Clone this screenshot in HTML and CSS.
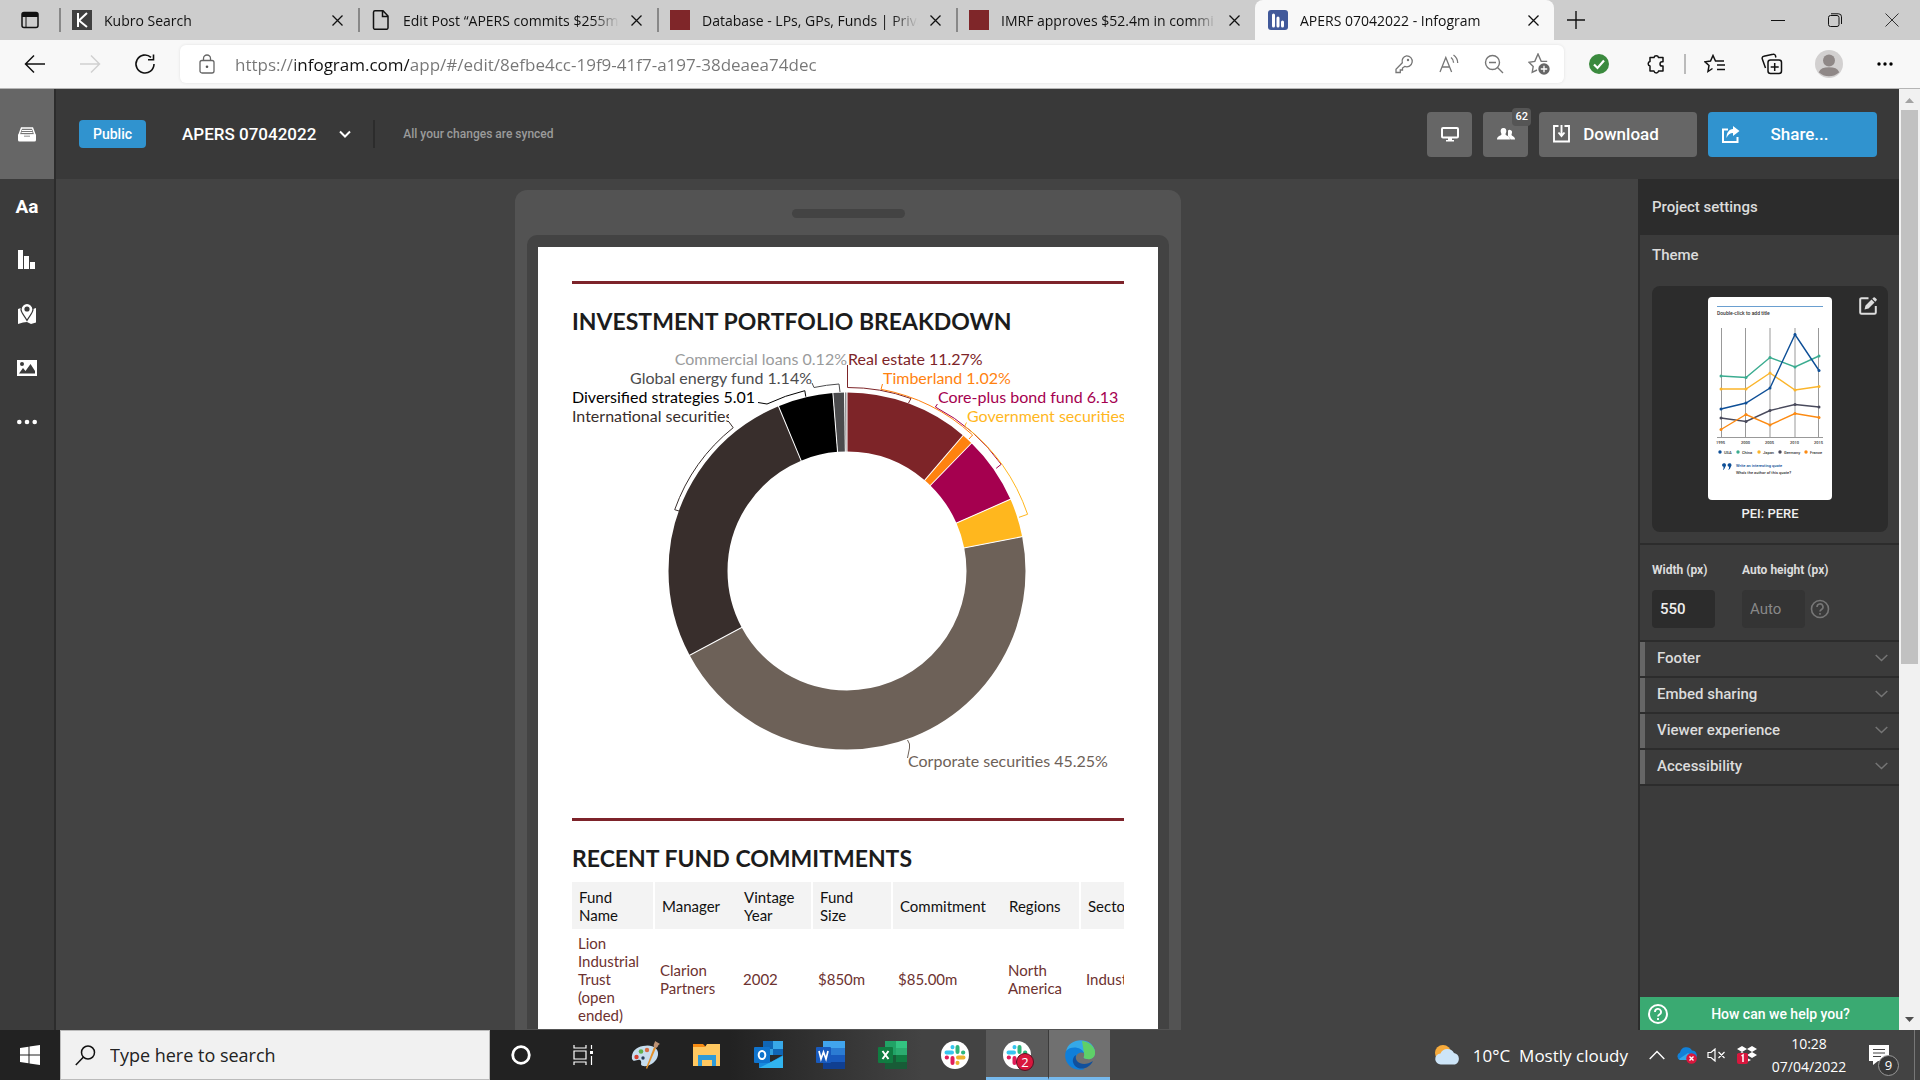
FILE: index.html
```html
<!DOCTYPE html>
<html lang="en">
<head>
<meta charset="UTF-8">
<meta name="viewport" content="width=device-width, initial-scale=1.0">
<title>APERS 07042022 - Infogram</title>
<link rel="stylesheet" href="styles.css">
</head>
<body>

<!-- Browser tabs -->
<div class="tab-strip">
    <button class="tab-menu" aria-label="Tab actions">
        <svg width="20" height="20" viewBox="0 0 20 20"><rect x="2" y="2.500" width="16" height="15" rx="2" fill="none" stroke="#111" stroke-width="1.500"/><path d="M2 3h16v4H2z" fill="#111"/><path d="M6 7v10" stroke="#111"/></svg>
    </button>
    <div class="tab">
        <svg width="20" height="20" viewBox="0 0 20 20"><path d="M0 0h20v20H0z" fill="#404040"/><path d="M6 3v14M15 3L7 10.500 15 17" fill="none" stroke="#fff" stroke-width="2"/></svg>
        <a href="#">Kubro Search</a>
        <button class="tab-close" aria-label="Close tab"><svg width="11" height="11" viewBox="0 0 11 11"><path d="M.5.5l10 10M10.500.5l-10 10" stroke="#111" stroke-width="1.300"/></svg></button>
    </div>
    <div class="tab">
        <svg width="20" height="20" viewBox="0 0 20 20"><path d="M4 .8h8l5 5.200v12a1.500 1.500 0 0 1-1.500 1.300H4A1.500 1.500 0 0 1 2.500 18V2.200A1.500 1.500 0 0 1 4 .8zM11.500 1v5.500H17" fill="none" stroke="#111" stroke-width="1.500"/></svg>
        <a href="#">Edit Post “APERS commits $255m</a>
        <button class="tab-close" aria-label="Close tab"><svg width="11" height="11" viewBox="0 0 11 11"><path d="M.5.5l10 10M10.500.5l-10 10" stroke="#111" stroke-width="1.300"/></svg></button>
    </div>
    <div class="tab">
        <svg width="20" height="20"><path d="M0 0h20v20H0z" fill="#7f2629"/></svg>
        <a href="#">Database - LPs, GPs, Funds | Priva</a>
        <button class="tab-close" aria-label="Close tab"><svg width="11" height="11" viewBox="0 0 11 11"><path d="M.5.5l10 10M10.500.5l-10 10" stroke="#111" stroke-width="1.300"/></svg></button>
    </div>
    <div class="tab">
        <svg width="20" height="20"><path d="M0 0h20v20H0z" fill="#7f2629"/></svg>
        <a href="#">IMRF approves $52.4m in commi</a>
        <button class="tab-close" aria-label="Close tab"><svg width="11" height="11" viewBox="0 0 11 11"><path d="M.5.5l10 10M10.500.5l-10 10" stroke="#111" stroke-width="1.300"/></svg></button>
    </div>
    <div class="tab active">
        <svg width="20" height="20" viewBox="0 0 20 20"><rect width="20" height="20" rx="3" fill="#41599a"/><path d="M5.500 5v11M10 8v8M14.500 12v4" stroke="#fff" stroke-width="3" stroke-linecap="round"/></svg>
        <a href="#">APERS 07042022 - Infogram</a>
        <button class="tab-close" aria-label="Close tab"><svg width="11" height="11" viewBox="0 0 11 11"><path d="M.5.5l10 10M10.500.5l-10 10" stroke="#111" stroke-width="1.300"/></svg></button>
    </div>
    <button class="new-tab" aria-label="New tab"><svg width="18" height="18" viewBox="0 0 18 18"><path d="M9 0v18M0 9h18" stroke="#111" stroke-width="1.400"/></svg></button>
    <div class="window-controls">
        <button aria-label="Minimize"><svg width="14" height="14" viewBox="0 0 14 14"><path d="M0 7.500h14" stroke="#111"/></svg></button>
        <button aria-label="Restore"><svg width="14" height="14" viewBox="0 0 14 14"><rect x=".5" y="2.500" width="10.500" height="11" rx="2" fill="none" stroke="#111"/><path d="M3 .8h7.500a3 3 0 0 1 3 3V11" fill="none" stroke="#111"/></svg></button>
        <button aria-label="Close"><svg width="14" height="14" viewBox="0 0 14 14"><path d="M.5.5l13 13M13.500.5l-13 13" stroke="#333"/></svg></button>
    </div>
</div>

<!-- Address bar -->
<div class="toolbar">
    <div class="nav-buttons">
        <button aria-label="Back"><svg width="22" height="20" viewBox="0 0 22 20"><path d="M21 10H2M10 1.500L1.500 10l8.500 8.500" fill="none" stroke="#111" stroke-width="1.500"/></svg></button>
        <button aria-label="Forward" disabled><svg width="22" height="20" viewBox="0 0 22 20"><path d="M1 10h19M12 1.500l8.500 8.500-8.500 8.500" fill="none" stroke="#d0d0d0" stroke-width="1.500"/></svg></button>
        <button aria-label="Refresh"><svg width="22" height="22" viewBox="0 0 22 22"><path d="M20 11a9 9 0 1 1-3-6.700M19.500 1.500v5.300h-5.500" fill="none" stroke="#111" stroke-width="1.600"/></svg></button>
    </div>
    <div class="address">
        <svg width="16" height="20" viewBox="0 0 16 20"><rect x="1" y="6.500" width="14" height="12.500" rx="2" fill="none" stroke="#666" stroke-width="1.300"/><path d="M4.500 6.500V4.500a3.500 3.500 0 0 1 7 0v2" fill="none" stroke="#666" stroke-width="1.300"/><circle cx="8" cy="12.700" r="1.300" fill="#555"/></svg>
        <input type="text" class="url" aria-label="Address" value="https://infogram.com/app/#/edit/8efbe4cc-19f9-41f7-a197-38deaea74dec">
        <div class="address-actions">
            <button aria-label="Passwords"><svg width="20" height="20" viewBox="0 0 20 20"><path d="M12.500 1.800a5.500 5.500 0 1 1-1.800 10.600L8.500 14v2H6.300v2.500H2v-3.200l6.300-6.500a5.500 5.500 0 0 1 4.200-7z" fill="none" stroke="#767676" stroke-width="1.300"/><circle cx="14" cy="6" r="1.200" fill="#767676"/></svg></button>
            <button aria-label="Read aloud"><svg width="20" height="20" viewBox="0 0 20 20"><path d="M1 18L6.800 3.500 12.600 18M3 13h7.600M12 3.500c1.800 1.300 2.600 3 2.600 5.200M14.500 1c2.800 1.900 4.200 4.500 4.200 8" fill="none" stroke="#767676" stroke-width="1.300"/></svg></button>
            <button aria-label="Zoom"><svg width="20" height="20" viewBox="0 0 20 20"><circle cx="8.500" cy="8.500" r="7" fill="none" stroke="#767676" stroke-width="1.400"/><path d="M5 8.500h7M13.500 13.500l5.500 5.500" stroke="#767676" stroke-width="1.400"/></svg></button>
            <button aria-label="Add to favourites"><svg width="22" height="22" viewBox="0 0 22 22"><path d="M9 18l-4.800 2.300 1-5.800L1 10.200l5.800-.8L10 2l3.200 7.400h6" fill="none" stroke="#767676" stroke-width="1.400" transform="translate(0 -1)"/><circle cx="16" cy="16" r="5.700" fill="#666"/><path d="M16 12.800v6.400M12.800 16h6.400" stroke="#fff" stroke-width="1.300"/></svg></button>
        </div>
    </div>
    <div class="browser-actions">
        <button aria-label="Protection"><svg width="20" height="20" viewBox="0 0 20 20"><circle cx="10" cy="10" r="10" fill="#3b8a3e"/><path d="M5 10.500l3.500 3.500L15 6.500" fill="none" stroke="#fff" stroke-width="2.200"/></svg></button>
        <button aria-label="Extensions"><svg width="20" height="20" viewBox="0 0 20 20"><path d="M4 3.500h4a2.300 2.300 0 0 1 4.500 0h4.500v4.200h-.8a2.200 2.200 0 0 0 0 4.400h.8v5h-4.500a2.300 2.300 0 0 1-4.500 0H4v-5a2.300 2.300 0 0 1 0-4.500z" fill="none" stroke="#111" stroke-width="1.500" stroke-linejoin="round"/></svg></button>
        <span class="divider"></span>
        <button aria-label="Favourites"><svg width="22" height="20" viewBox="0 0 22 20"><path d="M8.500 14.500l-4.500 3 1-6L1 7.800l5.500-.8L9 1.500 11.500 7H20M13 11h8M13 15.500h8" fill="none" stroke="#111" stroke-width="1.500"/></svg></button>
        <button aria-label="Collections"><svg width="22" height="22" viewBox="0 0 22 22"><rect x="7" y="7" width="13.500" height="13.500" rx="2.500" fill="none" stroke="#111" stroke-width="1.500"/><path d="M13.700 10v8M9.700 14h8M4.500 15L1.300 6a2 2 0 0 1 1.500-2.800L12 1.200A2 2 0 0 1 14.500 3l.4 1.500" fill="none" stroke="#111" stroke-width="1.500"/></svg></button>
        <button aria-label="Profile"><svg width="28" height="28" viewBox="0 0 28 28"><circle cx="14" cy="14" r="14" fill="#d2d0d0"/><circle cx="14" cy="10.500" r="6" fill="#8f8887"/><path d="M5 22c2-5 16-5 18 0a14 14 0 0 1-18 0z" fill="#8f8887" stroke="#8f8887" stroke-width="2"/></svg></button>
        <button aria-label="Settings and more"><svg width="18" height="6" viewBox="0 0 18 6"><circle cx="2" cy="3" r="1.700"/><circle cx="8" cy="3" r="1.700"/><circle cx="14" cy="3" r="1.700"/></svg></button>
    </div>
</div>

<div class="app">
    <!-- Left tool rail -->
    <nav class="rail">
        <button class="active" aria-label="Objects"><svg width="18" height="15" viewBox="0 0 18 15"><path d="M3.500 1h11l2.500 7H1z" fill="#777" stroke="#fff" stroke-width="1.500"/><path d="M4 3.500h10M3.500 5.500h11" stroke="#fff"/><path d="M0 7.500h6v2h6v-2h6V13a1.500 1.500 0 0 1-1.500 1.500h-15A1.500 1.500 0 0 1 0 13z" fill="#fff"/></svg></button>
        <button class="text-tool">Aa</button>
        <button aria-label="Charts"><svg width="18" height="20" viewBox="0 0 18 20"><path d="M0 0h5v19H0zM6 6h5v13H6zM12 12h5v7h-5z" fill="#fff"/></svg></button>
        <button aria-label="Maps"><svg width="18" height="20" viewBox="0 0 18 20"><path d="M0 5l3-1 6 12 6-11 3-1v14.500l-5 1.500-4-2-4 .5L0 20z" fill="#fff"/><path d="M9 16.500C6 11 3 8.500 3 5.500a6 6 0 0 1 12 0c0 3-3 5.500-6 11z" fill="#fff" stroke="#3b3b3b" stroke-width="1.200"/><circle cx="9" cy="5" r="2.600" fill="#3b3b3b"/></svg></button>
        <button aria-label="Images"><svg width="20" height="16" viewBox="0 0 20 16"><path d="M0 0h20v16H0z" fill="#fff"/><circle cx="5" cy="4" r="2" fill="#3b3b3b"/><path d="M2 13.500L6 8l2.500 3L13.500 4l4.500 7v2.500z" fill="#3b3b3b"/></svg></button>
        <button aria-label="More"><svg width="20" height="6" viewBox="0 0 20 6"><g fill="#fff"><circle cx="2.300" cy="3" r="2.300"/><circle cx="10" cy="3" r="2.300"/><circle cx="17.700" cy="3" r="2.300"/></g></svg></button>
    </nav>

    <div class="workspace">
        <header class="project-bar">
            <span class="visibility">Public</span>
            <h1>APERS 07042022</h1>
            <button class="project-menu" aria-label="Project menu"><svg width="12" height="8" viewBox="0 0 12 8"><path d="M1 1.500l5 5 5-5" fill="none" stroke="#fff" stroke-width="2"/></svg></button>
            <span class="sync">All your changes are synced</span>
            <div class="project-actions">
                <button class="square" aria-label="Preview"><svg width="18" height="15" viewBox="0 0 18 15"><rect x="1" y="1" width="16" height="9.500" rx="1" fill="none" stroke="#fff" stroke-width="2"/><path d="M7 10h4v3h2v1.500H5V13h2z" fill="#fff"/></svg></button>
                <button class="square" aria-label="Team"><svg width="18" height="12" viewBox="0 0 18 12"><path d="M11 2.500A2.500 2.500 0 0 1 15 3.500c.2 1.500-.5 2.500-.5 3.500 1 1.500 3.500 1.500 3.500 4.500h-4.500c-.5-2-2-2.500-2.500-3.500z" fill="#fff"/><path d="M6.500 0C9 0 9.500 2 9.300 3.700 9 5 8.500 5.500 8.500 6.500c1 1.500 4.500 1.500 4.500 5H0c0-3.500 3.500-3.500 4.500-5C4.500 5.500 4 5 3.700 3.700 3.500 2 4 0 6.500 0z" fill="#fff"/></svg><span class="count">62</span></button>
                <button class="action"><svg width="18" height="18" viewBox="0 0 18 18"><path d="M5.500 1H1v15.500h15V1h-4.500M8.500 0v10M5.500 7.500l3 3.500 3-3.500" fill="none" stroke="#fff" stroke-width="1.900"/></svg><span>Download</span></button>
                <button class="action share"><svg width="18" height="17" viewBox="0 0 18 17"><path d="M6 3.500H1V16h14.500v-5" fill="none" stroke="#fff" stroke-width="2"/><path d="M11 0l6.500 5L11 10V7C8 7 6 8.500 4.500 12 4.500 6.500 7 3.500 11 3z" fill="#fff"/></svg><span>Share...</span></button>
            </div>
        </header>

        <div class="editor">
            <main class="canvas">
                <div class="phone">
                    <div class="speaker"></div>
                    <div class="bezel">
                        <article class="report">
                            <section class="breakdown">
                                <h2>INVESTMENT PORTFOLIO BREAKDOWN</h2>
                                <svg class="donut" viewBox="0 0 552 440">
                                    <!-- slices, each circle is 100 units long -->
                                    <g transform="translate(275 231) rotate(-90)" fill="none" stroke-width="59">
                                        <circle r="149" pathLength="100" stroke="#7d2428" stroke-dasharray="11.27 88.73"/>
                                        <circle r="149" pathLength="100" stroke="#ff820f" stroke-dasharray="1.02 98.98" stroke-dashoffset="-11.27"/>
                                        <circle r="149" pathLength="100" stroke="#a5004f" stroke-dasharray="6.13 93.87" stroke-dashoffset="-12.29"/>
                                        <circle r="149" pathLength="100" stroke="#ffb71e" stroke-dasharray="3.5 96.5" stroke-dashoffset="-18.42"/>
                                        <circle r="149" pathLength="100" stroke="#6d6158" stroke-dasharray="45.25 54.75" stroke-dashoffset="-21.92"/>
                                        <circle r="149" pathLength="100" stroke="#382e2c" stroke-dasharray="26.56 73.44" stroke-dashoffset="-67.17"/>
                                        <circle r="149" pathLength="100" stroke="#000" stroke-dasharray="5.01 94.99" stroke-dashoffset="-93.73"/>
                                        <circle r="149" pathLength="100" stroke="#4b4b4d" stroke-dasharray="1.14 98.86" stroke-dashoffset="-98.74"/>
                                        <circle r="149" pathLength="100" stroke="#9a9b9c" stroke-dasharray="0.12 99.88" stroke-dashoffset="-99.88"/>
                                    </g>
                                    <g transform="translate(275 231)" stroke="#fff">
                                        <path d="M0-179v60"/>
                                        <path d="M0-179v60" transform="rotate(40.57)"/>
                                        <path d="M0-179v60" transform="rotate(44.24)"/>
                                        <path d="M0-179v60" transform="rotate(66.31)"/>
                                        <path d="M0-179v60" transform="rotate(78.91)"/>
                                        <path d="M0-179v60" transform="rotate(241.81)"/>
                                        <path d="M0-179v60" transform="rotate(337.43)"/>
                                        <path d="M0-179v60" transform="rotate(355.46)"/>
                                        <path d="M0-179v60" transform="rotate(359.2)"/>
                                    </g>
                                    <!-- leader lines -->
                                    <g fill="none">
                                        <path d="M275.500 25v22.500A184 184 0 0 1 339 58.500l-2.500 4.500" stroke="#7d2428"/>
                                        <path d="M310.500 44l-1.500 5.300A187 187 0 0 1 400.600 95l-3.600 4" stroke="#ff820f"/>
                                        <path d="M365.400 64l-2 3A188 188 0 0 1 429.200 124.300l-5 4" stroke="#a5004f"/>
                                        <path d="M394.500 82.500l-1.700 3.500A190 190 0 0 1 455.600 174.300l-8.600 3" stroke="#ffb71e"/>
                                        <path d="M240 43l2 4.500A187 187 0 0 1 267 44l1 8" stroke="#4b4b4d"/>
                                        <path d="M186 62.500l9 1.500A187 187 0 0 1 232.800 50.700l1 6" stroke="#000"/>
                                        <path d="M157 82l4.200 5.700A184 184 0 0 0 102.700 169.700l4.300 1.300" stroke="#382e2c"/>
                                        <path d="M335.500 400q3 4 2 8l-2 10" stroke="#6d6158"/>
                                    </g>
                                    <g class="labels">
                                        <text x="275" y="25" text-anchor="end" fill="#9a9b9c">Commercial loans 0.12%</text>
                                        <text x="276" y="25" fill="#7d2428">Real estate 11.27%</text>
                                        <text x="240" y="44" text-anchor="end" fill="#4b4b4d">Global energy fund 1.14%</text>
                                        <text x="311" y="44" fill="#ff820f">Timberland 1.02%</text>
                                        <text x="0" y="63" fill="#000">Diversified strategies 5.01</text>
                                        <text x="366" y="63" fill="#a5004f">Core-plus bond fund 6.13</text>
                                        <svg x="0" y="64" width="157" height="26"><text x="0" y="18" fill="#382e2c">International securities</text></svg>
                                        <text x="395" y="82" fill="#ffb71e">Government securities</text>
                                        <text x="336" y="427" fill="#6d6158">Corporate securities 45.25%</text>
                                    </g>
                                </svg>
                            </section>

                            <section class="commitments">
                                <h2>RECENT FUND COMMITMENTS</h2>
                                <table>
                                    <thead>
                                        <tr>
                                            <th class="fund">Fund Name</th>
                                            <th class="manager">Manager</th>
                                            <th class="vintage">Vintage Year</th>
                                            <th class="size">Fund<br>Size</th>
                                            <th class="amount">Commitment</th>
                                            <th class="regions">Regions</th>
                                            <th class="sectors">Sectors</th>
                                        </tr>
                                    </thead>
                                    <tbody>
                                        <tr>
                                            <td>Lion Industrial Trust (open ended)</td>
                                            <td>Clarion Partners</td>
                                            <td>2002</td>
                                            <td>$850m</td>
                                            <td>$85.00m</td>
                                            <td>North America</td>
                                            <td>Industrial</td>
                                        </tr>
                                    </tbody>
                                </table>
                            </section>
                        </article>
                    </div>
                </div>
            </main>

            <!-- Project settings -->
            <aside class="settings">
                <h2>Project settings</h2>
                <section class="theme">
                    <h3>Theme</h3>
                    <div class="theme-card">
                        <button class="edit-theme" aria-label="Edit theme"><svg width="18" height="18" viewBox="0 0 18 18"><path d="M9.500 1.200H2.500A1.300 1.300 0 0 0 1.200 2.500v13a1.300 1.300 0 0 0 1.300 1.300h13a1.300 1.300 0 0 0 1.300-1.300V9" fill="none" stroke="#ddd" stroke-width="2"/><path d="M5.500 12.500l1-4 6-6 3 3-6 6zM13.300 1.700L14.500.5a1 1 0 0 1 1.400 0l1.600 1.600a1 1 0 0 1 0 1.400L16.300 4.700z" fill="#ddd"/></svg></button>
                        <svg class="preview" width="124" height="203" viewBox="0 0 124 203">
                            <rect width="124" height="203" rx="4" fill="#fff"/>
                            <path d="M9 9.500h106" stroke="#6a9fd0"/>
                            <text x="9" y="18">Double-click to add title</text>
                            <path d="M13.500 31v109M37.500 31v109M62 31v109M87 31v109M110.500 31v109M9 140.500h106" stroke="#999"/>
                            <g fill="none" stroke-width="1.400">
                                <path d="M13 79l25 1.500 24-20 25 9.500 24-11" stroke="#3bac90"/>
                                <path d="M13 92h25l24-16 25 17 24-3.500" stroke="#fbb52b"/>
                                <path d="M13 112l25-6 24-15L87 37.500l24 36" stroke="#0e4f97"/>
                                <path d="M13 121l25 3.500 24-11 25-6 24 2.500" stroke="#494a5c"/>
                                <path d="M13 132.500l25-15 24 10.500 25-11.500 24 4" stroke="#fc8a12"/>
                            </g>
                            <g fill="#3bac90"><circle cx="13" cy="79" r="1.500"/><circle cx="38" cy="80.500" r="1.500"/><circle cx="62" cy="60.500" r="1.500"/><circle cx="87" cy="70" r="1.500"/><circle cx="111" cy="59" r="1.500"/><circle cx="30" cy="155" r="1.700"/></g>
                            <g fill="#fbb52b"><circle cx="13" cy="92" r="1.500"/><circle cx="38" cy="92" r="1.500"/><circle cx="62" cy="76" r="1.500"/><circle cx="87" cy="93" r="1.500"/><circle cx="111" cy="89.500" r="1.500"/><circle cx="51" cy="155" r="1.700"/></g>
                            <g fill="#0e4f97"><circle cx="13" cy="112" r="1.500"/><circle cx="38" cy="106" r="1.500"/><circle cx="62" cy="91" r="1.500"/><circle cx="87" cy="37.500" r="1.500"/><circle cx="111" cy="73.500" r="1.500"/><circle cx="12" cy="155" r="1.700"/></g>
                            <g fill="#494a5c"><circle cx="13" cy="121" r="1.500"/><circle cx="38" cy="124.500" r="1.500"/><circle cx="62" cy="113.500" r="1.500"/><circle cx="87" cy="107.500" r="1.500"/><circle cx="111" cy="110" r="1.500"/><circle cx="72" cy="155" r="1.700"/></g>
                            <g fill="#fc8a12"><circle cx="13" cy="132.500" r="1.500"/><circle cx="38" cy="117.500" r="1.500"/><circle cx="62" cy="128" r="1.500"/><circle cx="87" cy="116.500" r="1.500"/><circle cx="111" cy="120.500" r="1.500"/><circle cx="98" cy="155" r="1.700"/></g>
                            <g class="tiny">
                                <text x="8" y="147">1995</text><text x="33" y="147">2000</text><text x="57" y="147">2005</text><text x="82" y="147">2010</text><text x="106" y="147">2015</text>
                                <text x="16" y="157">USA</text><text x="34" y="157">China</text><text x="55" y="157">Japan</text><text x="76" y="157">Germany</text><text x="102" y="157">France</text>
                                <text class="quote" x="28" y="170">Write an interesting quote</text>
                                <text x="28" y="177">Who's the author of this quote?</text>
                            </g>
                            <path d="M14 168a2 2 0 1 1 3.500 1.500Q17 172 14.500 173q1.500-1.500 1-3.200A2 2 0 0 1 14 168zm5.500 0a2 2 0 1 1 3.500 1.500q-.5 2.500-3 3.500 1.500-1.500 1-3.200a2 2 0 0 1-1.500-1.800z" fill="#0e4f97"/>
                        </svg>
                        <span class="theme-name">PEI: PERE</span>
                    </div>
                </section>
                <section class="dimensions">
                    <div class="field">
                        <label for="width">Width (px)</label>
                        <input type="text" id="width" value="550">
                    </div>
                    <div class="field">
                        <label for="height">Auto height (px)</label>
                        <div class="field-row">
                            <input type="text" id="height" placeholder="Auto" disabled>
                            <svg width="20" height="20" viewBox="0 0 20 20"><circle cx="10" cy="10" r="8.500" fill="none" stroke="#777" stroke-width="1.600"/><path d="M7 8a3 3 0 1 1 4.500 2.500Q10 11.400 10 12.600M10 14v1.700" fill="none" stroke="#777" stroke-width="1.600"/></svg>
                        </div>
                    </div>
                </section>
                <div class="accordion">
                    <button>Footer <svg width="13" height="8" viewBox="0 0 13 8"><path d="M.7 1l5.800 5.500L12.300 1" fill="none" stroke="#757575" stroke-width="1.500"/></svg></button>
                    <button>Embed sharing <svg width="13" height="8" viewBox="0 0 13 8"><path d="M.7 1l5.800 5.500L12.300 1" fill="none" stroke="#757575" stroke-width="1.500"/></svg></button>
                    <button>Viewer experience <svg width="13" height="8" viewBox="0 0 13 8"><path d="M.7 1l5.800 5.500L12.300 1" fill="none" stroke="#757575" stroke-width="1.500"/></svg></button>
                    <button>Accessibility <svg width="13" height="8" viewBox="0 0 13 8"><path d="M.7 1l5.800 5.500L12.300 1" fill="none" stroke="#757575" stroke-width="1.500"/></svg></button>
                </div>
                <button class="help">
                    <svg width="20" height="20" viewBox="0 0 20 20"><circle cx="10" cy="10" r="9" fill="none" stroke="#fff" stroke-width="2"/><path d="M7 8a3 3 0 1 1 4.500 2.500Q10 11.400 10 12.600M10 14v2" fill="none" stroke="#fff" stroke-width="1.800"/></svg>
                    <span>How can we help you?</span>
                </button>
            </aside>
        </div>
    </div>

    <div class="scrollbar">
        <svg width="9" height="5"><path d="M0 5h9L4.500 0z" fill="#a3a3a3"/></svg>
        <div class="thumb"></div>
        <svg width="9" height="5"><path d="M0 0h9L4.500 5z" fill="#505050"/></svg>
    </div>
</div>

<!-- Windows taskbar -->
<footer class="taskbar">
    <button class="start" aria-label="Start"><svg width="20" height="20" viewBox="0 0 20 20"><path d="M0 3l8.500-1.200v7.700H0zM9.500 1.600L20 0v9.500H9.500zM0 10.500h8.500v7.800L0 17zM9.500 10.500H20V20L9.500 18.400z" fill="#fff"/></svg></button>
    <label class="search">
        <svg width="21" height="21" viewBox="0 0 21 21"><circle cx="13" cy="7.500" r="6.500" fill="none" stroke="#111" stroke-width="1.500"/><path d="M8.500 12L.8 20" stroke="#111" stroke-width="1.500"/></svg>
        <input type="text" placeholder="Type here to search" aria-label="Search">
    </label>
    <div class="pinned">
        <button aria-label="Cortana"><svg width="20" height="20" viewBox="0 0 20 20"><circle cx="10" cy="10" r="8.300" fill="none" stroke="#fff" stroke-width="2.800"/></svg></button>
        <button aria-label="Task view"><svg width="20" height="20" viewBox="0 0 20 20"><path d="M1 0v3h12V0M1 20v-3h12v3M1 6h12v8H1zM18.500 0v4M18.500 11v9" fill="none" stroke="#fff" stroke-width="1.200"/><path d="M17 6h3v3h-3z" fill="#fff"/></svg></button>
        <button aria-label="Paint"><svg width="30" height="30" viewBox="0 0 30 30"><path d="M13 6c9-2 16 2 15 9s-9 12-15 11c-4-1 0-4-3-6-3-1-6 3-8-1C1 12 6 7 13 6z" fill="#c7ddee"/><circle cx="6.500" cy="17" r="2.200" fill="#d5402f"/><circle cx="11" cy="11.500" r="2.300" fill="#60b04e"/><circle cx="17" cy="10" r="2.200" fill="#d76b43"/><circle cx="13" cy="18" r="1.700" fill="#263e59"/><path d="M24 7l2 1-9 21-1-1z" fill="#e4902a"/><path d="M24 7c-1-3 1-4 1-6l5 3c-3 1-1 3-4 4z" fill="#bd9274"/></svg></button>
        <button aria-label="File Explorer"><svg width="28" height="24" viewBox="0 0 28 24"><path d="M0 1h10l3 3H0z" fill="#f78b12"/><path d="M0 4h12l2-3h13v22H0z" fill="#ffc860"/><path d="M5 23V12h18v11h-4v-6H9v6z" fill="#2f9bd8"/></svg></button>
        <button aria-label="Outlook"><svg width="30" height="28" viewBox="0 0 30 28"><path d="M9 0h20v14H9z" fill="#1066b5"/><path d="M19 0h10v8H19z" fill="#38a8e8"/><path d="M9 8h10v6H9z" fill="#32a0df"/><path d="M5 14l12 7 12-7v13H5z" fill="#1689dd"/><path d="M5 27l24-12v12z" fill="#31b4ee"/><rect y="6" width="16" height="16" rx="1" fill="#0f73cc"/><ellipse cx="8" cy="14" rx="3.300" ry="4" fill="none" stroke="#fff" stroke-width="2"/></svg></button>
        <button aria-label="Word"><svg width="30" height="28" viewBox="0 0 30 28"><path d="M7 0h22v7H7z" fill="#41a5ee"/><path d="M7 7h22v7H7z" fill="#2b7cd3"/><path d="M7 14h22v7H7z" fill="#185abd"/><path d="M7 21h22v7H7z" fill="#103f91"/><rect y="6" width="15" height="16" rx="1" fill="#185abd"/><path d="M3 10l2 8 2.500-7L10 18l2-8" fill="none" stroke="#fff" stroke-width="1.700"/></svg></button>
        <button aria-label="Excel"><svg width="30" height="28" viewBox="0 0 30 28"><path d="M7 0h11v14H7z" fill="#21a366"/><path d="M18 0h11v7H18z" fill="#33c481"/><path d="M18 7h11v7H18z" fill="#2cad70"/><path d="M7 14h22v14H7z" fill="#185c37"/><path d="M18 14h11v7H18z" fill="#107c41"/><rect y="6" width="15" height="16" rx="1" fill="#107c41"/><path d="M4.500 10l6 8M10.500 10l-6 8" stroke="#fff" stroke-width="2"/></svg></button>
        <button aria-label="Slack"><svg width="28" height="28" viewBox="0 0 28 28"><circle cx="14" cy="14" r="14" fill="#fff"/><g fill="none" stroke-width="4" stroke-linecap="round"><path d="M5.500 11.500H11M11.500 6v.3" stroke="#36c5f0"/><path d="M16.500 6v5M22 11.500h.3" stroke="#2eb67d"/><path d="M22.500 16.500H17M16.500 22v-.3" stroke="#ecb22e"/><path d="M11.500 22v-5M6 16.500h-.3" stroke="#e01e5a"/></g></svg></button>
        <button class="running" aria-label="Slack, 2 notifications"><svg width="28" height="28" viewBox="0 0 28 28"><circle cx="14" cy="14" r="14" fill="#fff"/><g fill="none" stroke-width="4" stroke-linecap="round"><path d="M5.500 11.500H11M11.500 6v.3" stroke="#36c5f0"/><path d="M16.500 6v5M22 11.500h.3" stroke="#2eb67d"/><path d="M22.500 16.500H17M16.500 22v-.3" stroke="#ecb22e"/><path d="M11.500 22v-5M6 16.500h-.3" stroke="#e01e5a"/></g></svg><span class="alert">2</span></button>
        <button class="running current" aria-label="Edge"><svg width="30" height="30" viewBox="0 0 30 30"><path d="M1 12C3-3 28-4 30 12c0 8-8 8-11 6-1-1 1-2 0-5-2-5-13-6-18-1z" fill="#35a9e8"/><path d="M17 1c9 1 14 8 13 13-1 6-8 6-11 4-1-1 1-2 0-5z" fill="#5fd068"/><path d="M1 11c5-6 16-4 18 2-4-2-9 1-8 7 1 5 5 8 9 9C8 33-3 22 1 11z" fill="#0f7fda"/><path d="M11 15c-2 8 8 12 17 6-3 6-9 9-15 7-6-3-7-10-2-13z" fill="#11509c"/></svg></button>
    </div>
    <div class="tray">
        <button class="weather">
            <svg width="26" height="20" viewBox="0 0 26 20"><circle cx="8" cy="8" r="8" fill="#f7ab3c"/><path d="M6 19.500a5.500 5.500 0 0 1-.5-11A7.500 7.500 0 0 1 19 8a6 6 0 0 1 1 11.500z" fill="#cde5f8"/></svg>
            <span>10°C&nbsp; Mostly cloudy</span>
        </button>
        <button aria-label="Show hidden icons"><svg width="16" height="10" viewBox="0 0 16 10"><path d="M.7 9L8 1.500 15.300 9" fill="none" stroke="#fff" stroke-width="1.400"/></svg></button>
        <button aria-label="OneDrive"><svg width="20" height="18" viewBox="0 0 20 18"><path d="M3 14a4 4 0 0 1 0-7.500A6.500 6.500 0 0 1 15 4.500 5 5 0 0 1 17 14z" fill="#1180d8"/><path d="M2 13l9-6 8 6-2 1H3z" fill="#35a7e8"/><circle cx="14.500" cy="12.500" r="5.300" fill="#d8173d"/><path d="M12.500 10.500l4 4M16.500 10.500l-4 4" stroke="#fff" stroke-width="1.400"/></svg></button>
        <button aria-label="Volume"><svg width="20" height="14" viewBox="0 0 20 14"><path d="M1 4.500h3L8 1v12L4 9.500H1zM11.500 4l6 6M17.500 4l-6 6" fill="none" stroke="#fff" stroke-width="1.200"/></svg></button>
        <button aria-label="Dropbox"><svg width="20" height="20" viewBox="0 0 20 20"><path d="M5 1l5 3-5 3-5-3zM15 1l5 3-5 3-5-3zM5 7l5 3-5 3-5-3zM15 7l5 3-5 3-5-3zM10 13l4 2-4 2z" fill="#fff"/><rect y="8" width="11" height="11" rx="2" fill="#d8173d"/><path d="M4.500 11l1.500-1v7" fill="none" stroke="#fff" stroke-width="1.500"/></svg></button>
        <div class="clock"><time>10:28</time><time>07/04/2022</time></div>
        <button class="notifications" aria-label="9 notifications"><svg width="20" height="20" viewBox="0 0 20 20"><path d="M0 0h20v16H9l-5 4v-4H0z" fill="#fff"/><path d="M4 4.500h12M4 8h12M4 11.500h8" stroke="#444"/></svg><span class="badge">9</span></button>
        <span class="show-desktop"></span>
    </div>
</footer>

</body>
</html>
```
FILE: styles.css
```css
* {
    box-sizing: border-box;
}
body {
    display: flex;
    flex-direction: column;
    height: 100vh;
    margin: 0;
    overflow: hidden;
    font-family: "Open Sans", "Noto Sans", sans-serif;
    background: #434343;
}
button {
    display: flex;
    align-items: center;
    justify-content: center;
    padding: 0;
    border: none;
    background: none;
    font: inherit;
    color: inherit;
    cursor: pointer;
}
input {
    min-width: 0;
    border: none;
    outline: none;
    font: inherit;
}
svg {
    flex: none;
}
h1, h2, h3 {
    margin: 0;
}

/* Tabs */
.tab-strip {
    display: flex;
    flex: none;
    height: 40px;
    background: #cdcdcd;
    font-size: 14px;
}
.tab-menu {
    flex: none;
    width: 59px;
}
.tab {
    display: flex;
    flex: 0 1 299px;
    align-items: center;
    min-width: 0;
    padding: 0 15px 0 13px;
    background: linear-gradient(#888, #888) left center / 2px 24px no-repeat;
}
.tab a {
    flex: 1;
    min-width: 0;
    margin: 0 12px;
    overflow: hidden;
    white-space: nowrap;
    text-decoration: none;
    color: #111;
    -webkit-mask-image: linear-gradient(90deg, #000 88%, transparent);
    mask-image: linear-gradient(90deg, #000 88%, transparent);
}
.tab.active {
    background: #f8f8f8;
    border-radius: 8px 8px 0 0;
}
.new-tab {
    width: 44px;
}
.window-controls {
    display: flex;
    margin-left: auto;
}
.window-controls button {
    width: 57px;
}

/* Toolbar */
.toolbar {
    display: flex;
    flex: none;
    align-items: center;
    height: 49px;
    background: #f8f8f8;
    border-bottom: 1px solid #b5b5b5;
}
.nav-buttons {
    display: flex;
    padding: 0 8px 0 7px;
}
.nav-buttons button {
    width: 55px;
    height: 38px;
}
.address {
    display: flex;
    flex: 1;
    align-items: center;
    height: 38px;
    padding: 0 3px 0 19px;
    background: #fff;
    border-radius: 6px;
    box-shadow: 0 0 3px #e0e0e0;
}
.url {
    flex: 1;
    margin-left: 20px;
    padding: 0;
    font-size: 17px;
    color: transparent;
    background: linear-gradient(90deg, #767676 60px, #111 60px, #111 174px, #767676 174px);
    -webkit-background-clip: text;
    background-clip: text;
}
.address-actions {
    display: flex;
}
.address-actions button {
    width: 45px;
}
.browser-actions {
    display: flex;
    align-items: center;
    padding: 0 6px;
}
.browser-actions button {
    width: 57px;
}
.divider {
    width: 2px;
    height: 20px;
    background: #bbb;
}

/* Editor */
.app {
    display: flex;
    flex: 1;
    min-height: 0;
    font-family: Roboto, sans-serif;
    color: #fff;
}
.rail {
    display: flex;
    flex: none;
    flex-direction: column;
    width: 56px;
    background: #3b3b3b;
    border-right: 2px solid #2c2c2c;
}
.rail button {
    height: 54px;
}
.rail .active {
    height: 90px;
    background: #666;
}
.rail .text-tool {
    font-size: 19px;
    font-weight: 700;
}
.workspace {
    display: flex;
    flex: 1;
    flex-direction: column;
    min-width: 0;
}
.project-bar {
    display: flex;
    flex: none;
    align-items: center;
    height: 90px;
    padding: 0 22px 0 23px;
    background: #393939;
}
.visibility {
    padding: 0 14px;
    line-height: 28px;
    font-size: 14px;
    font-weight: 500;
    background: #3093cf;
    border-radius: 4px;
}
.project-bar h1 {
    margin-left: 36px;
    font-size: 17px;
    font-weight: 500;
}
.project-menu {
    width: 59px;
    height: 28px;
    border-right: 2px solid #2c2c2c;
}
.sync {
    margin-left: 28px;
    font-size: 12px;
    font-weight: 500;
    color: #9b9b9b;
}
.project-actions {
    display: flex;
    gap: 11px;
    margin-left: auto;
}
.project-actions button {
    height: 45px;
    background: #666;
    border-radius: 4px;
}
.project-actions .square {
    position: relative;
    width: 45px;
}
.count {
    position: absolute;
    top: -4px;
    right: -3px;
    padding: 0 3px;
    line-height: 18px;
    font-size: 11px;
    font-weight: 500;
    background: #555;
    border-radius: 4px;
}
.project-actions .action {
    width: 158px;
    padding: 0 14px;
    font-size: 17px;
    font-weight: 500;
}
.action span {
    flex: 1;
    padding-right: 12px;
}
.project-actions .share {
    width: 169px;
    background: #3093cf;
}
.share span {
    padding-right: 4px;
}
.editor {
    display: flex;
    flex: 1;
    min-height: 0;
}
.canvas {
    display: flex;
    flex: 1;
    justify-content: center;
    min-width: 0;
    padding: 11px 20px 0 22px;
    overflow: hidden;
    background: #434343;
}

/* Phone frame */
.phone {
    width: 666px;
    padding: 19px 12px 0;
    background: #535353;
    border-radius: 12px 12px 0 0;
}
.speaker {
    width: 113px;
    height: 9px;
    margin: 0 auto 17px;
    background: #434343;
    border-radius: 5px;
}
.bezel {
    padding: 12px 11px 0;
    background: #434343;
    border-radius: 10px 10px 0 0;
}
.report {
    padding: 34px 34px 0;
    background: #fff;
    font-family: Lato, sans-serif;
    color: #1c1c1c;
}
.report section {
    border-top: 3px solid #7d232a;
    overflow: hidden;
}
.report h2 {
    padding-top: 22px;
    line-height: 30px;
    font-size: 23px;
    font-weight: 700;
    white-space: nowrap;
}
.report .breakdown {
    height: 537px;
}
.donut {
    display: block;
    width: 100%;
    margin-top: 4px;
}
.labels {
    font-size: 16px;
}
.commitments table {
    width: 570px;
    margin-top: 9px;
    table-layout: fixed;
    border-collapse: collapse;
    font-size: 15px;
    line-height: 18px;
    text-align: left;
}
.commitments th {
    height: 47px;
    padding: 0 7px;
    font-weight: 400;
    color: #111;
    background: #f3f3f3;
}
.commitments td {
    padding: 5px 6px;
    color: #6d3230;
}
.commitments .fund,
.commitments .vintage,
.commitments .size,
.commitments .regions {
    border-right: 2px solid #fff;
}
.fund {
    width: 82px;
}
.manager {
    width: 83px;
}
.vintage {
    width: 75px;
}
.size {
    width: 80px;
}
.amount {
    width: 110px;
}
.regions {
    width: 78px;
}

/* Settings panel */
.settings {
    display: flex;
    flex: none;
    flex-direction: column;
    width: 261px;
    background: #3b3b3b;
    border-left: 2px solid #2c2c2c;
    color: #dcdcdc;
}
.settings h2 {
    padding-left: 12px;
    line-height: 56px;
    font-size: 15px;
    font-weight: 500;
    background: #2c2c2c;
}
.settings h3 {
    line-height: 40px;
    font-size: 15px;
    font-weight: 500;
}
.theme {
    padding: 0 11px 11px 12px;
    border-bottom: 2px solid #2c2c2c;
}
.theme-card {
    position: relative;
    display: flex;
    flex-direction: column;
    align-items: center;
    height: 246px;
    margin-top: 11px;
    padding-top: 11px;
    background: #2c2c2c;
    border-radius: 8px;
}
.edit-theme {
    position: absolute;
    top: 11px;
    right: 11px;
}
.preview text {
    font-size: 5px;
    font-weight: 500;
    fill: #333;
}
.preview .tiny text {
    font-size: 4px;
}
.preview .tiny .quote {
    fill: #0e4f97;
}
.theme-name {
    line-height: 28px;
    font-size: 13px;
    font-weight: 500;
    color: #f0f0f0;
}
.dimensions {
    display: flex;
    gap: 27px;
    height: 97px;
    padding: 17px 12px 0;
    border-bottom: 2px solid #2c2c2c;
}
.field label {
    display: block;
    line-height: 17px;
    font-size: 12px;
    font-weight: 700;
}
.field input {
    width: 63px;
    height: 38px;
    margin-top: 11px;
    padding: 0 8px;
    font-size: 15px;
    font-weight: 500;
    color: #eee;
    background: #2c2c2c;
    border-radius: 4px;
}
.field input:disabled {
    background: #343434;
}
.field input::placeholder {
    font-weight: 400;
    color: #888;
}
.field-row {
    display: flex;
    align-items: center;
    gap: 5px;
}
.field-row svg {
    margin-top: 11px;
}
.accordion button {
    justify-content: space-between;
    width: 100%;
    height: 36px;
    padding: 0 11px 2px 17px;
    font-size: 15px;
    font-weight: 500;
    background: linear-gradient(#666, #666) left / 5px 100% no-repeat;
    border-bottom: 2px solid #2c2c2c;
}
.help {
    height: 33px;
    margin-top: auto;
    padding: 0 6px 0 8px;
    font-size: 14px;
    font-weight: 500;
    color: #fff;
    background: #3aaa72;
}
.help span {
    flex: 1;
}

/* Page scrollbar */
.scrollbar {
    display: flex;
    flex: none;
    flex-direction: column;
    align-items: center;
    width: 21px;
    padding: 9px 0 8px;
    background: #f1f1f1;
}
.thumb {
    width: 17px;
    height: 60%;
    margin: 7px 0 auto;
    background: #c1c1c1;
}

/* Taskbar */
.taskbar {
    display: flex;
    flex: none;
    height: 50px;
    background: linear-gradient(90deg, #222 38%, #434343 48%);
    color: #fff;
    font-size: 17px;
}
.start {
    width: 60px;
}
.search {
    display: flex;
    flex: 0 1 430px;
    align-items: center;
    padding: 0 14px;
    background: #f1f1f1;
    border: 1px solid #bbb;
}
.search input {
    flex: 1;
    margin-left: 14px;
    padding: 0;
    font-size: 18px;
    background: none;
}
.search input::placeholder {
    color: #222;
}
.pinned {
    display: flex;
}
.pinned button {
    width: 62px;
}
.running {
    position: relative;
    background: #5a5a5a;
    border-bottom: 3px solid #76b9ed;
}
.running svg {
    margin-top: 3px;
}
.pinned .current {
    background: #707070;
    border-left: 1px solid #3b3b3b;
}
.alert {
    position: absolute;
    top: 23px;
    right: 14px;
    width: 18px;
    line-height: 16px;
    font-size: 13px;
    background: #d8173d;
    border: 1px solid #5a1020;
    border-radius: 50%;
}
.tray {
    display: flex;
    align-items: center;
    margin-left: auto;
}
.tray button {
    width: 30px;
    height: 50px;
}
.tray .weather {
    gap: 12px;
    width: auto;
    margin-right: 14px;
}
.clock {
    display: flex;
    flex-direction: column;
    width: 94px;
    line-height: 23px;
    font-size: 14px;
    text-align: center;
}
.tray .notifications {
    position: relative;
    width: 46px;
}
.badge {
    position: absolute;
    right: 3px;
    bottom: 4px;
    width: 21px;
    line-height: 19px;
    font-size: 13px;
    background: #383838;
    border: 1px solid #999;
    border-radius: 50%;
}
.show-desktop {
    width: 13px;
    height: 50px;
    border-right: 1px solid #777;
    margin-right: 5px;
}
```
